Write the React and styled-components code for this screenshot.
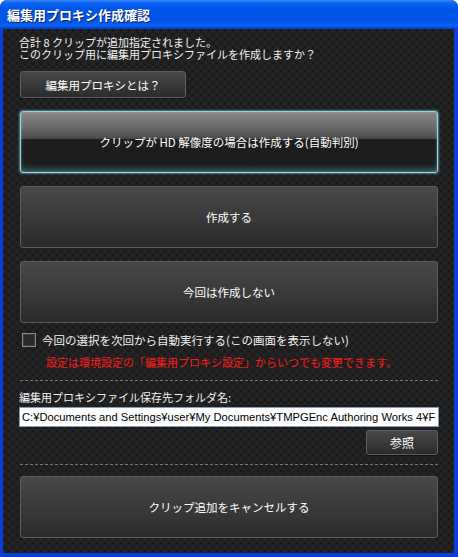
import React from "react";
import styled, { createGlobalStyle, css } from "styled-components";

const Global = createGlobalStyle`
  html, body { margin: 0; padding: 0; background: #fff; }
  body { font-family: "Noto Sans CJK JP", "Liberation Sans", sans-serif; }
`;

const Window = styled.div`
  width: 458px;
  height: 557px;
  display: flex;
  flex-direction: column;
  border-radius: 7px 7px 0 0;
  overflow: hidden;
  background: #0a3fd8;
`;

const TitleBar = styled.div`
  height: 29px;
  flex: none;
  display: flex;
  align-items: center;
  padding-left: 7px;
  background: linear-gradient(
    #3a8cff 0,
    #0b63f0 10%,
    #0055ea 30%,
    #0054e6 70%,
    #0a61f2 88%,
    #003fcf 100%
  );
  color: #fff;
  font-size: 13px;
  font-weight: bold;
  text-shadow: 1px 1px 0 #0a1f6b;
`;

const Body = styled.div`
  flex: 1;
  margin: 0 4px 4px 3px;
  padding: 6px 17px 0 16px;
  display: flex;
  flex-direction: column;
  background: repeating-conic-gradient(#1c1c1c 0 25%, #242424 0 50%) 0 0 / 8px 8px;
  color: #f2f2f2;
  font-size: 11px;
`;

const Message = styled.div`
  line-height: 12px;
  padding-top: 1px;
`;

const buttonBase = css`
  display: flex;
  align-items: center;
  justify-content: center;
  box-sizing: border-box;
  border: 1px solid #5e5e5e;
  border-radius: 3px;
  color: #fff;
  font-family: inherit;
  font-size: 11px;
  background: linear-gradient(#484848, #2b2b2b);
`;

const SmallButton = styled.div`
  ${buttonBase};
  width: 166px;
  height: 27px;
  margin: 11px 0 0 1px;
  font-size: 11.5px;
  box-shadow: 0 1px 0 #111;
`;

const BigButton = styled.div`
  ${buttonBase};
  width: 418px;
  height: 62px;
  margin: ${(p) => p.$top}px 0 0 1px;
  font-size: 11.5px;
  ${(p) =>
    p.$active &&
    css`
      border: 1px solid #9fd3e0;
      background: linear-gradient(
        #8a8a8a 0,
        #6a6a6a 25%,
        #4a4a4a 44%,
        #1d1d1d 46%,
        #1a1a1a 100%
      );
      box-shadow: 0 0 2px 1px rgba(120, 200, 225, 0.55),
        inset 0 -5px 6px -2px rgba(100, 185, 215, 0.45),
        inset 0 0 2px rgba(150, 210, 230, 0.5);
    `}
`;

const CheckRow = styled.label`
  display: flex;
  align-items: center;
  gap: 6px;
  margin: 10px 0 0 3px;
  height: 14px;
  font-size: 11.5px;
`;

const Check = styled.span`
  width: 12px;
  height: 12px;
  border: 1px solid #8a8a8a;
  background: #2a2a2a;
  box-shadow: inset 0 0 0 1px #3a3a3a;
`;

const Note = styled.div`
  color: #ff1a1a;
  margin: 9px 0 0 27px;
  line-height: 12px;
`;

const Dashed = styled.div`
  height: 0;
  border-top: 1px dashed #777;
  width: 418px;
  margin: ${(p) => p.$top}px 0 0 1px;
`;

const FieldLabel = styled.div`
  margin-top: 10px;
  line-height: 12px;
`;

const PathInput = styled.div`
  box-sizing: border-box;
  width: 420px;
  height: 20px;
  margin-top: 4px;
  background: #fff;
  border: 1px solid #7f9db9;
  color: #000;
  font-family: "Liberation Sans", sans-serif;
  font-size: 11.2px;
  line-height: 18px;
  padding-left: 2px;
  white-space: nowrap;
  overflow: hidden;
`;

const BrowseRow = styled.div`
  display: flex;
  justify-content: flex-end;
  width: 419px;
  margin-top: 3px;
`;

const BrowseButton = styled.div`
  ${buttonBase};
  width: 72px;
  height: 25px;
  font-size: 12px;
  box-shadow: 0 1px 0 #111;
`;

export default function App() {
  return (
    <>
      <Global />
      <Window>
        <TitleBar>編集用プロキシ作成確認</TitleBar>
        <Body>
          <Message>
            合計 8 クリップが追加指定されました。
            <br />
            このクリップ用に編集用プロキシファイルを作成しますか？
          </Message>
          <SmallButton>編集用プロキシとは？</SmallButton>
          <BigButton $top={13} $active>
            クリップが HD 解像度の場合は作成する(自動判別)
          </BigButton>
          <BigButton $top={13}>作成する</BigButton>
          <BigButton $top={13}>今回は作成しない</BigButton>
          <CheckRow>
            <Check />
            今回の選択を次回から自動実行する(この画面を表示しない)
          </CheckRow>
          <Note>設定は環境設定の「編集用プロキシ設定」からいつでも変更できます。</Note>
          <Dashed $top={12} />
          <FieldLabel>編集用プロキシファイル保存先フォルダ名:</FieldLabel>
          <PathInput>
            C:¥Documents and Settings¥user¥My Documents¥TMPGEnc Authoring Works 4¥F
          </PathInput>
          <BrowseRow>
            <BrowseButton>参照</BrowseButton>
          </BrowseRow>
          <Dashed $top={9} />
          <BigButton $top={11}>クリップ追加をキャンセルする</BigButton>
        </Body>
      </Window>
    </>
  );
}
